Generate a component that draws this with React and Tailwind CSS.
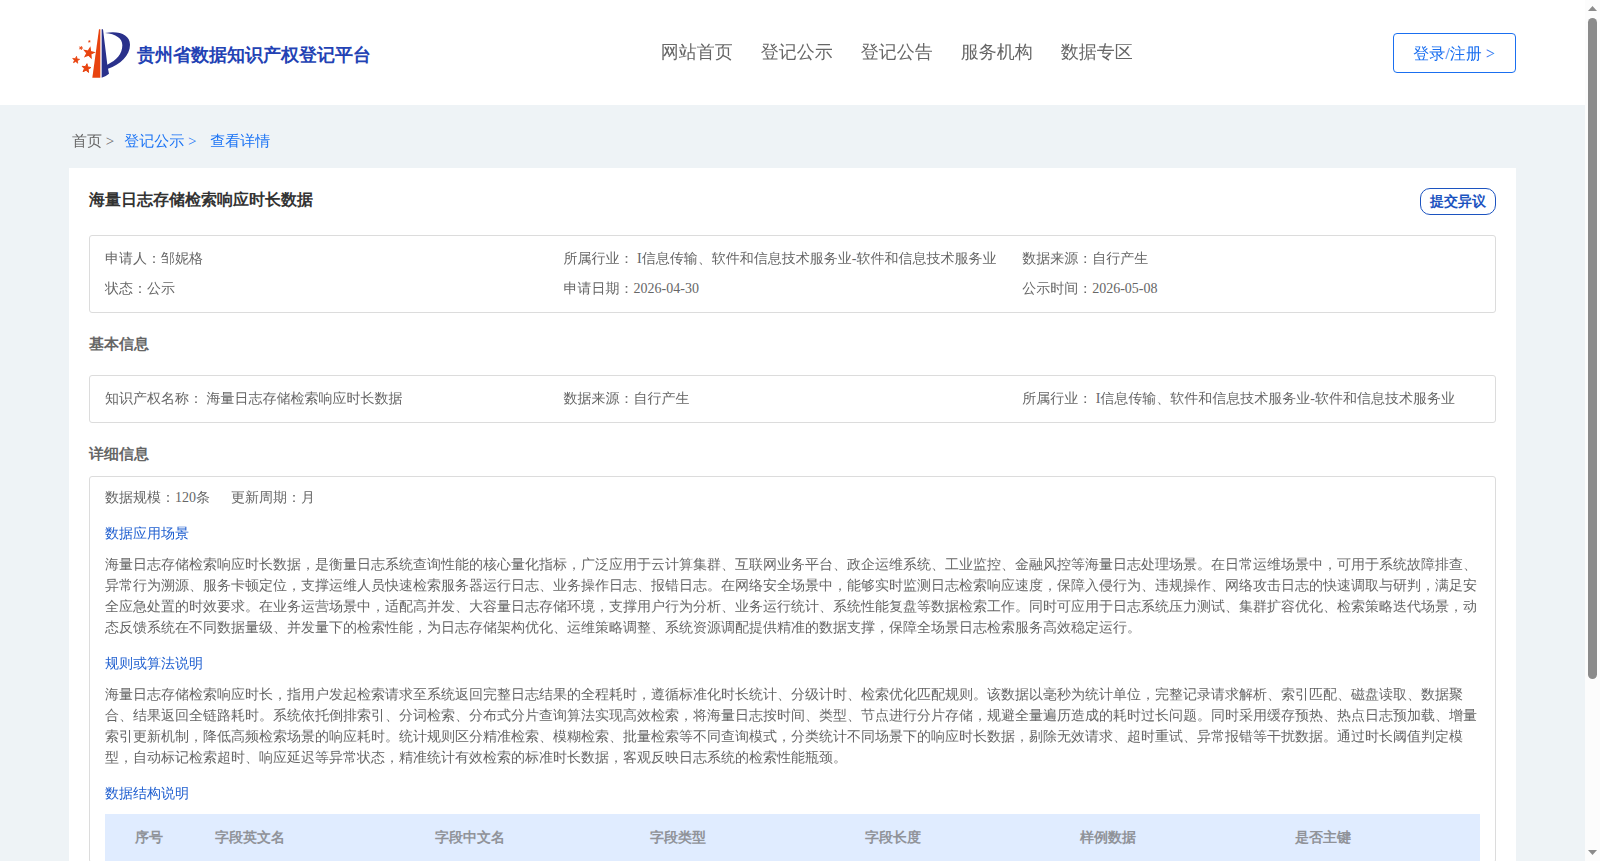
import React from 'react';

const menus = ['网站首页', '登记公示', '登记公告', '服务机构', '数据专区'];

const resumen = [
  '申请人：邹妮格',
  '所属行业： I信息传输、软件和信息技术服务业-软件和信息技术服务业',
  '数据来源：自行产生',
  '状态：公示',
  '申请日期：2026-04-30',
  '公示时间：2026-05-08',
];

const basicInfo = [
  '知识产权名称： 海量日志存储检索响应时长数据',
  '数据来源：自行产生',
  '所属行业： I信息传输、软件和信息技术服务业-软件和信息技术服务业',
];

const sections = [
  {
    title: '数据应用场景',
    text: '海量日志存储检索响应时长数据，是衡量日志系统查询性能的核心量化指标，广泛应用于云计算集群、互联网业务平台、政企运维系统、工业监控、金融风控等海量日志处理场景。在日常运维场景中，可用于系统故障排查、异常行为溯源、服务卡顿定位，支撑运维人员快速检索服务器运行日志、业务操作日志、报错日志。在网络安全场景中，能够实时监测日志检索响应速度，保障入侵行为、违规操作、网络攻击日志的快速调取与研判，满足安全应急处置的时效要求。在业务运营场景中，适配高并发、大容量日志存储环境，支撑用户行为分析、业务运行统计、系统性能复盘等数据检索工作。同时可应用于日志系统压力测试、集群扩容优化、检索策略迭代场景，动态反馈系统在不同数据量级、并发量下的检索性能，为日志存储架构优化、运维策略调整、系统资源调配提供精准的数据支撑，保障全场景日志检索服务高效稳定运行。',
  },
  {
    title: '规则或算法说明',
    text: '海量日志存储检索响应时长，指用户发起检索请求至系统返回完整日志结果的全程耗时，遵循标准化时长统计、分级计时、检索优化匹配规则。该数据以毫秒为统计单位，完整记录请求解析、索引匹配、磁盘读取、数据聚合、结果返回全链路耗时。系统依托倒排索引、分词检索、分布式分片查询算法实现高效检索，将海量日志按时间、类型、节点进行分片存储，规避全量遍历造成的耗时过长问题。同时采用缓存预热、热点日志预加载、增量索引更新机制，降低高频检索场景的响应耗时。统计规则区分精准检索、模糊检索、批量检索等不同查询模式，分类统计不同场景下的响应时长数据，剔除无效请求、超时重试、异常报错等干扰数据。通过时长阈值判定模型，自动标记检索超时、响应延迟等异常状态，精准统计有效检索的标准时长数据，客观反映日志系统的检索性能瓶颈。',
  },
];

const columns = [
  { name: '字段英文名', width: 'w-[220px]' },
  { name: '字段中文名', width: 'w-[215px]' },
  { name: '字段类型', width: 'w-[215px]' },
  { name: '字段长度', width: 'w-[215px]' },
  { name: '样例数据', width: 'w-[215px]' },
  { name: '是否主键', width: 'w-[185px]' },
];

const Star = ({ x, y, r, rotate = 0 }) => (
  <polygon
    points="0,-1 0.25,-0.34 0.95,-0.31 0.4,0.13 0.59,0.81 0,0.42 -0.59,0.81 -0.4,0.13 -0.95,-0.31 -0.25,-0.34"
    transform={`translate(${x} ${y}) rotate(${rotate}) scale(${r})`}
    fill="#e8430f"
    stroke="#e8430f"
    strokeWidth="0.2"
  />
);

const Logo = () => (
  <svg className="w-[60px] h-[52px]" viewBox="60 50 180 156">
    <path d="M147 57 L151 57 L151 202 L127 202 Z" fill="#e8430f" />
    <path d="M155 57 L159 57 L172 163 C200 150 217 130 217 105 C217 84 198 71 165 68 C206 60 240 72 240 103 C240 136 210 162 174 175 L177 190 Q168 198 155 202 Z" fill="#2a318b" />
    <Star x={117} y={128} r={16} rotate={12} />
    <Star x={78} y={149} r={11} rotate={8} />
    <Star x={109} y={174} r={14} rotate={8} />
    <Star x={93} y={113} r={6} rotate={20} />
    <Star x={118} y={93} r={4} />
  </svg>
);

const InfoBox = ({ items }) => (
  <div className="grid grid-cols-[458.6px_458.6px_1fr] border border-[#dcdcdc] rounded-[3px] px-[15px] py-2">
    {items.map((item) => (
      <div key={item} className="h-[30px] leading-[30px] whitespace-nowrap">{item}</div>
    ))}
  </div>
);

const Header = () => (
  <header className="h-[105px] bg-white flex items-start justify-between pl-[70px] pr-[69px]">
    <div className="flex w-[590.8px] pt-[27px]">
      <Logo />
      <h1 className="ml-[7px] mt-[14px] text-lg leading-7 font-bold font-['Liberation_Serif',serif] text-[#2342b4]">贵州省数据知识产权登记平台</h1>
    </div>
    <nav className="flex flex-1 gap-7 pt-[38px] text-lg leading-7">
      {menus.map((menu) => (
        <a key={menu}>{menu}</a>
      ))}
    </nav>
    <button className="mt-[33px] w-[123px] h-10 pt-[2px] pr-px border border-[#1a6ff0] rounded text-base text-[#1a6ff0]">
      登录/注册 &gt;
    </button>
  </header>
);

const Scrollbar = () => (
  <div className="w-[15px] h-full bg-[#fcfcfc] flex flex-col items-center justify-between py-[6px]">
    <svg className="w-[9px] h-[5px]" viewBox="0 0 9 5"><path d="M0 5 L4.5 0 L9 5 Z" fill="#8b8b8b" /></svg>
    <div className="w-[9px] flex-1 pt-[7px]">
      <div className="h-[661px] rounded-full bg-[#8b8b8b]" />
    </div>
    <svg className="w-[9px] h-[5px]" viewBox="0 0 9 5"><path d="M0 0 L9 0 L4.5 5 Z" fill="#8b8b8b" /></svg>
  </div>
);

const App = () => {
  return (
    <div className="flex h-[861px] overflow-hidden bg-[#eef3f6] text-[#666] font-['Liberation_Serif','WenQuanYi_Zen_Hei','Noto_Sans_CJK_SC',serif]">
      <div className="flex-1 min-w-0">
        <Header />

        <div className="flex h-[63px] pl-[72px] pt-[25px] text-[15px] leading-[22px]">
          <span>首页 &gt;</span>
          <span className="ml-[10px] text-[#1a73f5]">登记公示 &gt;</span>
          <span className="ml-[13.7px] text-[#1a73f5]">查看详情</span>
        </div>

        <main className="ml-[69px] mr-[69px] bg-white px-5 pt-5 text-sm">
          <div className="flex items-start justify-between h-[47px]">
            <h2 className="text-base leading-6 font-bold font-['Liberation_Serif',serif] text-[#333]">海量日志存储检索响应时长数据</h2>
            <button className="w-[76px] h-[27px] border border-[#1c53c0] rounded-[10px] text-sm font-bold font-['Liberation_Serif',serif] text-[#1c53c0]">
              提交异议
            </button>
          </div>

          <InfoBox items={resumen} />
          <h3 className="h-[62px] leading-[62px] text-[15px] font-bold font-['Liberation_Serif',serif]">基本信息</h3>
          <InfoBox items={basicInfo} />
          <h3 className="h-[53px] leading-[62px] text-[15px] font-bold font-['Liberation_Serif',serif]">详细信息</h3>

          <div className="border border-[#dcdcdc] rounded-[3px] px-[15px] pt-[10px]">
            <div className="flex gap-[21px] leading-[21px]">
              <span>数据规模：120条</span>
              <span>更新周期：月</span>
            </div>
            {sections.map((section) => (
              <section key={section.title} className="pt-[15px]">
                <h4 className="leading-[21px] text-[#1f5fd0]">{section.title}</h4>
                <p className="mt-[10px] leading-[21px] h-[84px]">{section.text}</p>
              </section>
            ))}
            <h4 className="mt-[15px] leading-[21px] text-[#1f5fd0]">数据结构说明</h4>

            <table className="w-full mt-[10px] table-fixed border-collapse font-['Liberation_Serif',serif]">
              <thead>
                <tr className="h-12 bg-[#e0ecff] text-left text-[#909399]">
                  <th className="w-[110px] pr-[22px] text-center">序号</th>
                  {columns.map((col) => (
                    <th key={col.name} className={col.width}>{col.name}</th>
                  ))}
                </tr>
              </thead>
            </table>
          </div>
        </main>
      </div>
      <Scrollbar />
    </div>
  );
};

export default App;
